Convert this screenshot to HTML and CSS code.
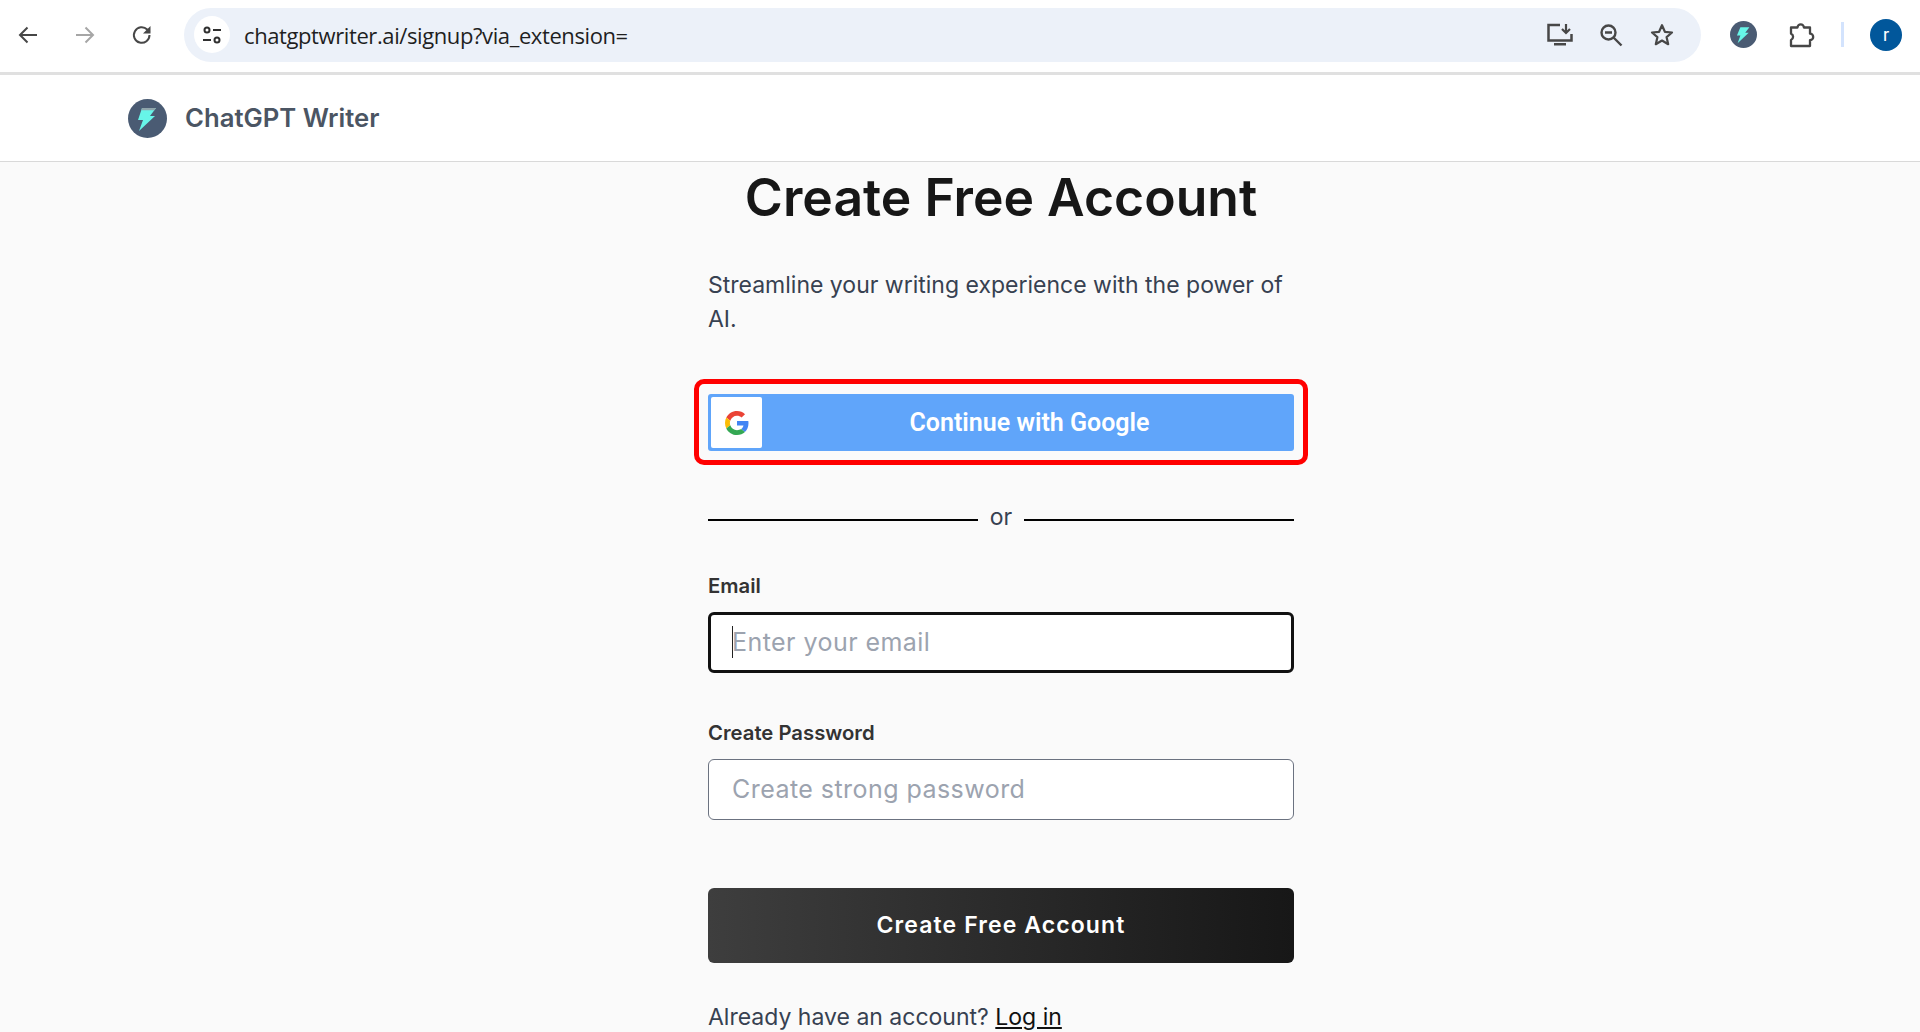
FILE: index.html
```html
<!DOCTYPE html>
<html lang="en">
<head>
    <meta charset="UTF-8">
    <meta name="viewport" content="width=device-width, initial-scale=1.0">
    <title>ChatGPT Writer - Create Free Account</title>
    <link rel="stylesheet" href="styles.css">
</head>
<body>
    <!-- browser toolbar -->
    <div class="toolbar">
        <div class="nav-btn">
            <svg width="24" height="24" viewBox="0 0 24 24"><path d="M21 12H4M11.500 4.500 4 12l7.500 7.500" fill="none" stroke="#474747" stroke-width="2"/></svg>
        </div>
        <div class="nav-btn">
            <svg width="24" height="24" viewBox="0 0 24 24"><path d="M3 12h17M12.500 4.500 20 12l-7.500 7.500" fill="none" stroke="#a6a6a6" stroke-width="2"/></svg>
        </div>
        <div class="nav-btn">
            <svg width="24" height="24" viewBox="0 0 24 24"><path d="M19.500 12a7.800 7.800 0 1 1-2.300-5.500L19.500 9" fill="none" stroke="#474747" stroke-width="2"/><path d="M20.500 3v7.500H13z" fill="#474747"/></svg>
        </div>
        <div class="omnibox">
            <div class="site-chip">
                <svg width="22" height="22" viewBox="0 0 22 22" fill="none" stroke="#303030" stroke-width="2"><circle cx="6" cy="6" r="2.500"/><path d="M12 6h8M2 16h8"/><circle cx="16" cy="16" r="2.500"/></svg>
            </div>
            <span class="url">chatgptwriter.ai/signup?via_extension=</span>
            <div class="omni-icons">
                <div class="omni-btn">
                    <svg width="28" height="24" viewBox="0 0 28 24"><path d="M14 2H2.500v15.500h23V11" fill="none" stroke="#474747" stroke-width="2.500"/><path d="M8 20h12v2.500H8z" fill="#474747"/><path d="M20 1v8.500M16 6l4 4 4-4" fill="none" stroke="#474747" stroke-width="2.200"/></svg>
                </div>
                <div class="omni-btn">
                    <svg width="24" height="24" viewBox="0 0 24 24" fill="none" stroke="#474747" stroke-width="2.400"><circle cx="9.500" cy="9.500" r="7"/><path d="M14.500 14.500 22.500 22.500M6 9.500h7"/></svg>
                </div>
                <div class="omni-btn">
                    <svg width="26" height="26" viewBox="0 0 26 26"><path d="M13 3.200l2.900 6.600 7.100.7-5.400 4.700 1.600 7-6.200-3.700-6.200 3.700 1.600-7L3 10.500l7.100-.7z" fill="none" stroke="#474747" stroke-width="2.200" stroke-linejoin="round"/></svg>
                </div>
            </div>
        </div>
        <div class="ext-btn">
            <svg width="27" height="27" viewBox="0 0 39 39"><circle cx="19.500" cy="19.500" r="19.500" fill="#4a5b73"/><path d="M15 9h13l-6 8h5L11 32l4-11h-5z" fill="#67f5e8"/></svg>
        </div>
        <div class="ext-btn puzzle">
            <svg width="28" height="28" viewBox="0 0 28 28"><path d="M3 6.500h6.500a3.200 3.200 0 1 1 6.400 0H22v6.200a3.200 3.200 0 1 1 0 6.400V25H3v-6a3.500 3.500 0 0 0 0-6.400z" fill="none" stroke="#474747" stroke-width="2.300" stroke-linejoin="round"/></svg>
        </div>
        <div class="toolbar-sep"></div>
        <div class="avatar">r</div>
    </div>

    <!-- site header -->
    <header class="site-header">
        <svg class="logo" width="39" height="39" viewBox="0 0 39 39">
            <circle cx="19.500" cy="19.500" r="19.500" fill="#4a5b73"/>
            <path d="M14 9h14l-6 8h5L11 32l4-11h-5z" fill="#67f5e8"/>
            <path d="M14 9h14l-1.500 2.200H13.300z" fill="#8fa5ab"/>
        </svg>
        <span class="brand">ChatGPT Writer</span>
    </header>

    <main class="signup">
        <h1>Create Free Account</h1>
        <p class="intro">Streamline your writing experience with the power of AI.</p>

        <div class="highlight">
            <button class="google-btn" type="button">
                <span class="google-tile">
                    <svg width="24" height="24" viewBox="0 0 48 48">
                        <path fill="#EA4335" d="M24 9.500c3.540 0 6.710 1.220 9.210 3.600l6.850-6.850C35.900 2.380 30.470 0 24 0 14.620 0 6.510 5.380 2.560 13.220l7.980 6.190C12.430 13.720 17.740 9.500 24 9.500z"/>
                        <path fill="#4285F4" d="M46.980 24.550c0-1.570-.15-3.090-.38-4.550H24v9.020h12.940c-.58 2.960-2.260 5.480-4.780 7.180l7.730 6c4.510-4.180 7.090-10.360 7.090-17.650z"/>
                        <path fill="#FBBC05" d="M10.530 28.590c-.48-1.450-.76-2.990-.76-4.590s.27-3.140.76-4.590l-7.980-6.190C.92 16.460 0 20.120 0 24c0 3.880.92 7.540 2.560 10.780l7.970-6.190z"/>
                        <path fill="#34A853" d="M24 48c6.480 0 11.930-2.130 15.890-5.810l-7.730-6c-2.150 1.450-4.920 2.300-8.160 2.300-6.260 0-11.570-4.220-13.470-9.910l-7.980 6.190C6.510 42.620 14.620 48 24 48z"/>
                    </svg>
                </span>
                <span class="google-label">Continue with Google</span>
            </button>
        </div>

        <div class="divider"><span>or</span></div>

        <form class="signup-form">
            <label for="email">Email</label>
            <div class="input-wrap">
                <input type="email" id="email" class="focused" placeholder="Enter your email">
                <span class="caret"></span>
            </div>

            <label for="password" class="password-label">Create Password</label>
            <div class="input-wrap">
                <input type="password" id="password" placeholder="Create strong password">
            </div>

            <button class="submit-btn" type="button">Create Free Account</button>
        </form>

        <p class="login-line">Already have an account? <a href="#">Log in</a></p>
    </main>
</body>
</html>
```

FILE: styles.css
```css
* {
    box-sizing: border-box;
}

html, body {
    height: 100%;
}

body {
    margin: 0;
    overflow: hidden;
    background-color: #fafafa;
    color: #374151;
    font-family: Inter, "Liberation Sans", sans-serif;
}

/* browser toolbar */
.toolbar {
    display: flex;
    align-items: center;
    height: 75px;
    padding: 0 0 3px 8px;
    background: #fff;
    border-bottom: 3px solid #e0e0e0;
}

.nav-btn {
    display: flex;
    align-items: center;
    justify-content: center;
    width: 40px;
    height: 40px;
    margin-right: 17px;
}

.omnibox {
    display: flex;
    align-items: center;
    width: 1517px;
    height: 54px;
    margin-left: 5px;
    padding-left: 10px;
    background: #ecf1f9;
    border-radius: 27px;
}

.site-chip {
    display: flex;
    align-items: center;
    justify-content: center;
    width: 36px;
    height: 37px;
    background: #fff;
    border-radius: 50%;
}

.url {
    margin-left: 14px;
    font-family: "Open Sans", sans-serif;
    font-size: 22px;
    letter-spacing: -0.400px;
    color: #1f1f1f;
}

.omni-icons {
    display: flex;
    gap: 11px;
    margin-left: auto;
    margin-right: 19px;
}

.omni-btn {
    display: flex;
    align-items: center;
    justify-content: center;
    width: 40px;
    height: 40px;
}

.ext-btn {
    display: flex;
    align-items: center;
    justify-content: center;
    width: 32px;
    height: 32px;
    margin-left: 26px;
}

.ext-btn.puzzle {
    margin-left: 27px;
}

.toolbar-sep {
    width: 3px;
    height: 25px;
    margin-left: 23px;
    background: #d3e3fd;
}

.avatar {
    width: 32px;
    height: 32px;
    margin-left: 26px;
    background: #01579b;
    border-radius: 50%;
    color: #fff;
    font-family: Roboto, sans-serif;
    font-size: 18px;
    line-height: 32px;
    text-align: center;
}

/* site header */
.site-header {
    display: flex;
    align-items: center;
    height: 87px;
    padding-left: 128px;
    background: #fff;
    border-bottom: 1px solid #d9d9d9;
}

.brand {
    margin-left: 18px;
    margin-bottom: 2px;
    font-size: 25.700px;
    font-weight: 600;
    color: #4b5563;
}

/* form column */
.signup {
    width: 586px;
    margin-left: 708px;
}

h1 {
    margin: 5px 0 0;
    font-size: 51.700px;
    font-weight: 600;
    line-height: 60px;
    color: #171717;
    text-align: center;
    white-space: nowrap;
}

.intro {
    margin: 41px 0 0;
    font-size: 23px;
    line-height: 34px;
}

.highlight {
    margin: 43px -14px 0;
    padding: 10px 9px 9px;
    border: 5px solid #ff0000;
    border-radius: 10px;
}

.google-btn {
    display: flex;
    align-items: center;
    width: 100%;
    height: 57px;
    padding: 3px;
    background: #60a5fa;
    border: none;
    border-radius: 3px;
    color: #fff;
}

.google-tile {
    display: flex;
    align-items: center;
    justify-content: center;
    width: 51px;
    height: 51px;
    background: #fff;
    border-radius: 2px;
}

.google-label {
    flex: 1;
    padding-left: 6px;
    font-family: Roboto, sans-serif;
    font-size: 25px;
    font-weight: 600;
    text-align: center;
}

.divider {
    display: flex;
    align-items: center;
    gap: 12px;
    height: 30px;
    margin-top: 40px;
    font-size: 23px;
}

.divider span {
    margin-bottom: 6px;
}

.divider::before, .divider::after {
    content: "";
    flex: 1;
    height: 2px;
    background: #000;
}

.signup-form label {
    display: block;
    margin-top: 37px;
    margin-bottom: 12px;
    font-size: 20.300px;
    font-weight: 600;
    line-height: 28px;
    color: #333;
}

.signup-form .password-label {
    margin-top: 46px;
}

.input-wrap {
    position: relative;
}

.input-wrap input {
    display: block;
    width: 100%;
    height: 61px;
    padding: 0 23px 2px;
    background: #fff;
    border: 1px solid #6b7280;
    border-radius: 6px;
    outline: none;
    font-family: Inter, sans-serif;
    font-size: 25px;
    letter-spacing: 0.450px;
    color: #111;
}

.input-wrap input.focused {
    padding: 0 21px 2px;
    border: 3px solid #111;
}

.input-wrap input::placeholder {
    color: #9ca3af;
    opacity: 1;
}

.caret {
    position: absolute;
    top: 14px;
    left: 24px;
    width: 1px;
    height: 32px;
    background: #222;
}

.submit-btn {
    display: block;
    width: 100%;
    height: 75px;
    margin-top: 68px;
    padding-bottom: 3px;
    background: linear-gradient(90deg, #3e3e3e, #171717);
    border: none;
    border-radius: 6px;
    font-family: Inter, sans-serif;
    font-size: 23px;
    font-weight: 600;
    letter-spacing: 1.100px;
    color: #fff;
}

.login-line {
    margin: 39px 0 0;
    font-size: 23px;
    line-height: 30px;
}

.login-line a {
    color: #111;
}
```
